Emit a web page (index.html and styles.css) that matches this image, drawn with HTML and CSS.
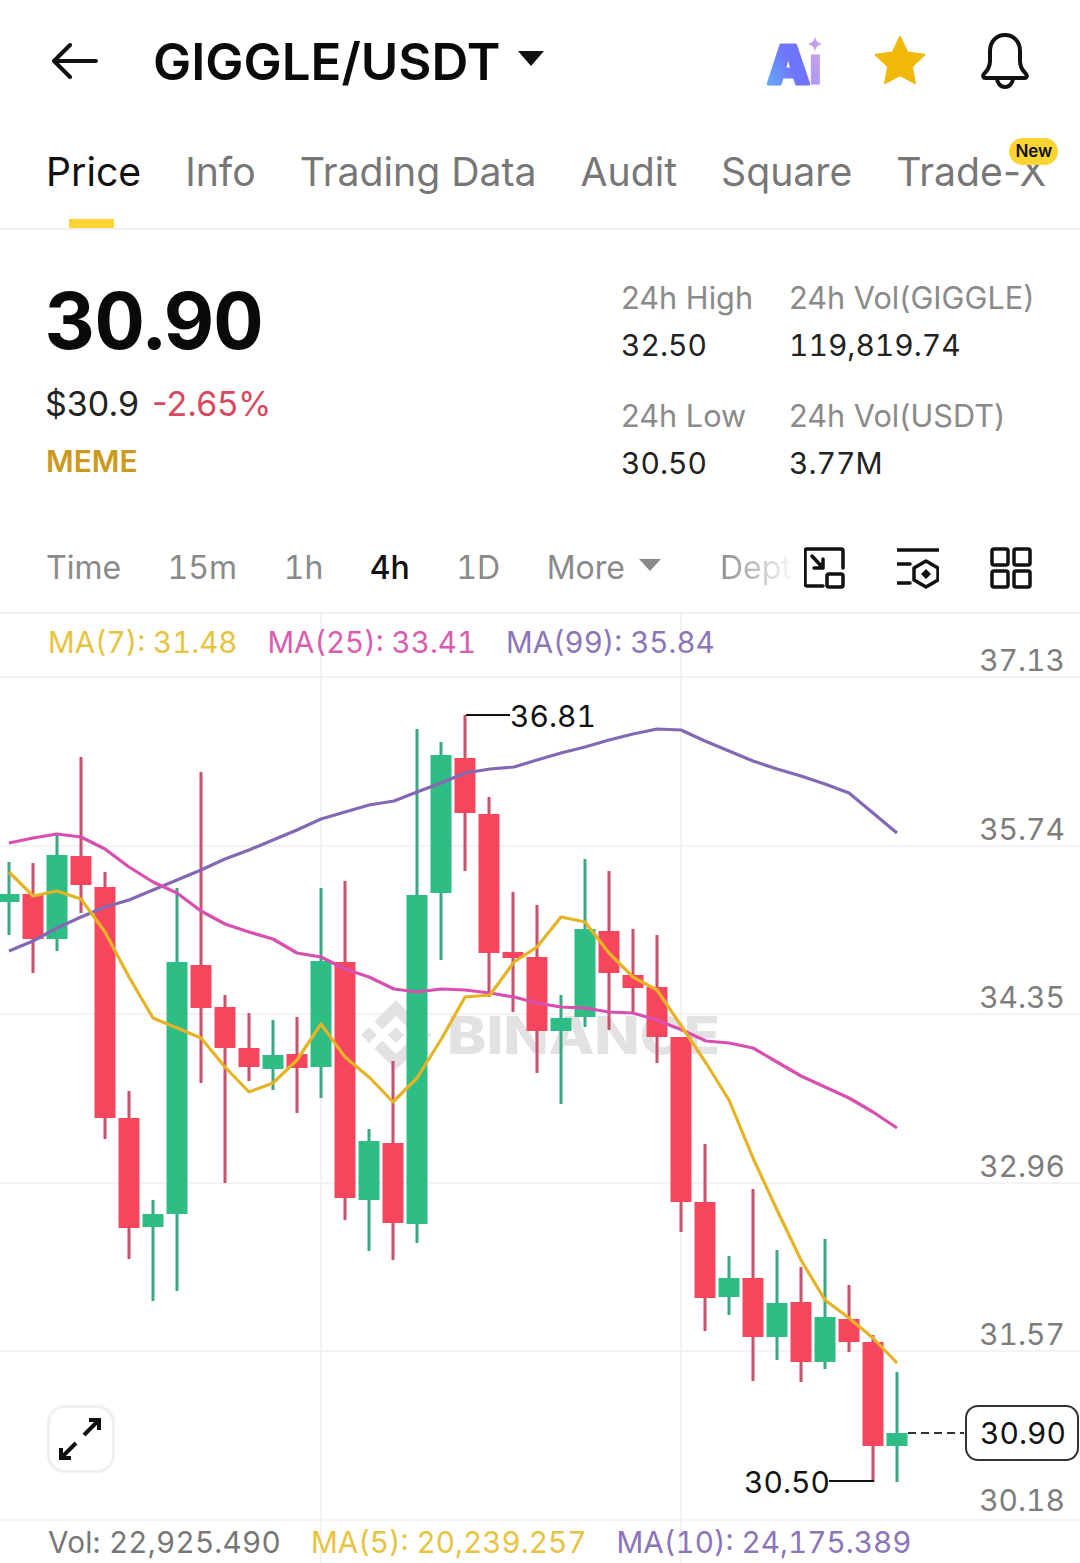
FILE: index.html
```html
<!DOCTYPE html>
<html lang="en">
<head>
    <meta charset="UTF-8">
    <title>GIGGLE/USDT</title>
    <link rel="stylesheet" href="styles.css">
</head>
<body>
    <div class="page">
        <header class="topbar">
            <svg class="back" viewBox="0 0 46 36"><path d="M44 18H3M18 2L2 18l16 16"/></svg>
            <h1 class="pair">GIGGLE/USDT</h1>
            <span class="pair-caret"></span>
            <div class="top-icons">
                <svg class="ai" width="60" height="60" viewBox="0 0 60 60">
                    <defs>
                        <linearGradient id="aiA" x1="0" y1="1" x2="1" y2="0.3">
                            <stop offset="0" stop-color="#62b4ff"/>
                            <stop offset="0.6" stop-color="#6f75fb"/>
                        </linearGradient>
                        <linearGradient id="aiI" x1="0" y1="1" x2="0" y2="0">
                            <stop offset="0" stop-color="#a796fb"/>
                            <stop offset="1" stop-color="#d3a3dc"/>
                        </linearGradient>
                    </defs>
                    <text class="ai-a" x="5" y="53" fill="url(#aiA)" stroke="url(#aiA)">A</text>
                    <text class="ai-i" x="46" y="53" fill="url(#aiI)" stroke="url(#aiI)">ı</text>
                    <path d="M53 5c.8 5 2.500 6.800 7.500 8-5 1.200-6.700 3-7.500 8-.8-5-2.500-6.800-7.500-8 5-1.200 6.700-3 7.500-8z" fill="#c4a0e6"/>
                </svg>
                <svg class="star" width="52" height="52" viewBox="0 0 52 52">
                    <path d="M26 2l7.300 15.500 17 2.200-12.500 11.700 3.200 16.800L26 40l-15 8.200 3.200-16.800L1.700 19.700l17-2.200z" stroke="#f0b90b" stroke-width="2" stroke-linejoin="round" fill="#f0b90b"/>
                </svg>
                <svg class="bell" width="50" height="56" viewBox="0 0 50 56">
                    <path d="M25 2c-9 0-15 7-15 16v10c0 6-2.500 9-6 13-1.500 2-.8 4 1.500 4h39c2.300 0 3-2 1.500-4-3.500-4-6-7-6-13V18C40 9 34 2 25 2zM17 45c0 5 3.500 9 8 9s8-4 8-9"/>
                </svg>
            </div>
        </header>

        <nav class="tabs">
            <a class="tab active">Price</a>
            <a class="tab">Info</a>
            <a class="tab">Trading Data</a>
            <a class="tab">Audit</a>
            <a class="tab">Square</a>
            <a class="tab">Trade-X<span class="badge">New</span></a>
        </nav>

        <section class="stats">
            <div class="stats-main">
                <div class="last-price">30.90</div>
                <div class="fiat"><span class="usd">$30.9</span><span class="change">-2.65%</span></div>
                <div class="tag">MEME</div>
            </div>
            <div class="stats-grid">
                <div class="stat"><span class="stat-label">24h High</span><span class="stat-val">32.50</span></div>
                <div class="stat"><span class="stat-label">24h Vol(GIGGLE)</span><span class="stat-val">119,819.74</span></div>
                <div class="stat"><span class="stat-label">24h Low</span><span class="stat-val">30.50</span></div>
                <div class="stat"><span class="stat-label">24h Vol(USDT)</span><span class="stat-val">3.77M</span></div>
            </div>
        </section>

        <div class="toolbar">
            <div class="tf-list">
                <span class="tf">Time</span>
                <span class="tf">15m</span>
                <span class="tf">1h</span>
                <span class="tf active">4h</span>
                <span class="tf">1D</span>
                <span class="tf">More</span>
                <span class="more-caret"></span>
                <span class="tf depth">Dept</span>
            </div>
            <div class="tool-icons">
                <svg width="42" height="42" viewBox="805 545 42 42">
                    <path d="M824 584h-16a2 2 0 0 1-2-2v-33a2 2 0 0 1 2-2h34a2 2 0 0 1 2 2v17M813 554l11 12M824 557v9h-9"/>
                    <rect x="828" y="572" width="16" height="13" rx="2"/>
                </svg>
                <svg width="42" height="42" viewBox="897 546 42 42">
                    <path d="M897 549h41M897 563h13M897 582h13"/>
                    <path d="M926 560l12 7v12l-12 7-12-7v-12z"/>
                    <path class="fill" d="M926 568l5 5-5 5-5-5z"/>
                </svg>
                <svg width="42" height="42" viewBox="990 545 42 42">
                    <rect x="992" y="547" width="16" height="16" rx="2"/>
                    <rect x="1014" y="547" width="16" height="16" rx="2"/>
                    <rect x="992" y="569" width="16" height="16" rx="2"/>
                    <rect x="1014" y="569" width="16" height="16" rx="2"/>
                </svg>
            </div>
        </div>

        <section class="chart">
            <svg class="plot" width="1080" height="951" viewBox="0 612 1080 951">
                <!-- grid -->
                <path class="grid" d="M0 677H1080M0 846H1080M0 1014H1080M0 1183H1080M0 1351H1080M0 1520H1080M321 612V1563M681 612V1563"/>

                <!-- watermark -->
                <path class="mark" transform="translate(361 1000) scale(.553)" d="M38.730 53.200L63.310 28.620l24.600 24.600 14.300-14.310L63.310 0 24.420 38.900l14.310 14.300zM0 63.310l14.300-14.310 14.310 14.310-14.310 14.300zM38.730 73.410l24.580 24.580 24.600-24.600 14.310 14.290-38.900 38.910-38.910-38.880-.02-.02zM98 63.310l14.300-14.310 14.310 14.300-14.310 14.320zM77.830 63.300L63.310 48.780 52.590 59.500l-1.240 1.230-2.540 2.540 14.500 14.500 14.520-14.510z"/>
                <text class="mark-text" x="447" y="1054" textLength="273" lengthAdjust="spacingAndGlyphs">BINANCE</text>

                <!-- wicks -->
                <path class="wick up" d="M9 862V935M57 833V951M153 1200V1301M177 888V1291M273 1020V1090M321 888V1098M369 1129V1251M417 729V1243M441 742V960M561 995V1104M585 859V1027M729 1256V1315M777 1250V1360M825 1239V1369M897 1372V1482"/>
                <path class="wick down" d="M33 863V973M81 757V913M105 872V1139M129 1091V1259M201 772V1083M225 995V1183M249 1013V1081M297 1017V1113M345 881V1220M393 1061V1260M465 715V871M489 797V997M513 892V1012M537 905V1073M609 871V1030M633 929V1012M657 935V1063M681 1037V1232M705 1144V1331M753 1189V1381M801 1267V1382M849 1285V1352M873 1335V1482"/>

                <!-- bodies -->
                <path class="body up" d="M9 894V902M57 855V939M153 1214V1227M177 962V1214M273 1055V1069M321 961V1067M369 1141V1200M417 895V1224M441 755V893M561 1018V1031M585 929V1017M729 1278V1297M777 1303V1337M825 1317V1362M897 1433V1446"/>
                <path class="body down" d="M33 894V939M81 856V885M105 887V1118M129 1118V1228M201 965V1008M225 1007V1048M249 1048V1067M297 1054V1068M345 962V1198M393 1143V1223M465 758V813M489 814V953M513 952V958M537 957V1031M609 931V973M633 975V988M657 987V1037M681 1037V1202M705 1202V1298M753 1278V1337M801 1302V1362M849 1319V1342M873 1342V1446"/>

                <!-- moving averages -->
                <polyline class="ma ma99" points="9,951 33,941 57,928 81,917 105,907 129,900 153,890 177,880 201,870 225,859 249,850 273,840 297,830 321,819 345,812 369,805 394,801 417,792 441,783 465,773 490,769 514,767 537,760 561,753 585,747 609,740 633,734 657,729 681,730 705,741 729,751 753,761 777,769 801,776 825,784 849,793 873,813 897,833"/>
                <polyline class="ma ma25" points="9,843 33,838 57,834 81,837 105,849 129,867 153,882 177,893 201,911 225,924 249,932 273,939 297,953 321,957 345,969 369,977 394,989 417,992 441,989 465,990 490,993 514,997 537,1003 561,1007 585,1008 609,1012 633,1013 657,1020 682,1030 706,1041 729,1043 753,1048 777,1062 801,1076 825,1087 849,1098 873,1112 897,1128"/>
                <polyline class="ma ma7" points="9,872 33,896 57,891 81,899 105,932 129,977 153,1018 177,1028 201,1038 225,1067 249,1092 273,1083 297,1060 321,1024 345,1057 370,1078 393,1102 417,1078 442,1038 465,997 490,995 514,962 537,947 561,917 585,922 609,953 633,977 657,990 682,1027 706,1063 729,1100 753,1158 777,1210 801,1260 825,1300 849,1318 873,1338 897,1363"/>

                <!-- high, low and last price -->
                <path class="marker" d="M466 715H510M829 1481H874"/>
                <text class="pin" x="510" y="727">36.81</text>
                <text class="pin" x="744" y="1493">30.50</text>
                <path class="last-line" d="M908 1433H964"/>
                <rect class="last-box" x="966" y="1406" width="112" height="54" rx="12"/>
                <text class="pin" x="980" y="1444">30.90</text>

                <!-- price axis -->
                <text class="axis" x="1065" y="671">37.13</text>
                <text class="axis" x="1065" y="840">35.74</text>
                <text class="axis" x="1065" y="1008">34.35</text>
                <text class="axis" x="1065" y="1177">32.96</text>
                <text class="axis" x="1065" y="1345">31.57</text>
                <text class="axis" x="1065" y="1511">30.18</text>
            </svg>

            <div class="legend">
                <span class="c-ma7">MA(7): 31.48</span>
                <span class="c-ma25">MA(25): 33.41</span>
                <span class="c-ma99">MA(99): 35.84</span>
            </div>

            <button class="expand">
                <svg width="46" height="46" viewBox="0 0 46 46"><path d="M26 19L41 4M31 4h10v10M18 27L3 42M3 32v10h10"/></svg>
            </button>

            <div class="legend vol">
                <span class="c-vol">Vol: 22,925.490</span>
                <span class="c-ma7">MA(5): 20,239.257</span>
                <span class="c-ma99">MA(10): 24,175.389</span>
            </div>
        </section>
    </div>
</body>
</html>
```

FILE: styles.css
```css
*{
    margin:0;
    padding:0;
    box-sizing:border-box;
}
body{
    background:#fff;
    font-family:"Inter","Liberation Sans",sans-serif;
    color:#111;
}
.page{
    width:1080px;
    height:1563px;
    overflow:hidden;
}

/* top bar */
.topbar{
    height:122px;
    display:flex;
    align-items:center;
    padding:0 50px 0 52px;
}
.back{
    width:46px;
    height:36px;
    margin-right:55px;
    fill:none;
    stroke:#111;
    stroke-width:4;
    stroke-linecap:round;
    stroke-linejoin:round;
}
.pair{
    font-size:51px;
    font-weight:600;
    line-height:1;
    color:#0a0a0a;
}
.pair-caret{
    width:0;
    height:0;
    margin-left:18px;
    margin-bottom:6px;
    border-left:13px solid transparent;
    border-right:13px solid transparent;
    border-top:15px solid #111;
}
.top-icons{
    margin-left:auto;
    display:flex;
    align-items:center;
    gap:54px;
}
.ai{
    overflow:visible;
    margin-right:-2px;
}
.ai-a,.ai-i{
    font-size:54px;
    font-weight:900;
    stroke-linejoin:round;
}
.ai-a{
    stroke-width:3;
}
.ai-i{
    font-weight:700;
    stroke-width:1;
}
.bell path{
    fill:none;
    stroke:#111;
    stroke-width:4;
    stroke-linejoin:round;
}

/* tabs */
.tabs{
    height:108px;
    display:flex;
    align-items:flex-start;
    gap:44px;
    padding:26px 0 0 46px;
    border-bottom:2px solid #eeeeee;
}
.tab{
    position:relative;
    font-size:39.2px;
    line-height:48px;
    color:#777;
    white-space:nowrap;
}
.tab.active{
    color:#111;
}
.tab.active::after{
    content:"";
    position:absolute;
    left:23px;
    top:71px;
    width:45px;
    height:9px;
    background:#fcd535;
}
.badge{
    position:absolute;
    right:-12px;
    top:-10px;
    height:27px;
    padding:0 6px;
    border-radius:14px;
    background:#fcd535;
    color:#111;
    font-size:17px;
    font-weight:600;
    line-height:27px;
}

/* price block */
.stats{
    height:300px;
    display:flex;
    justify-content:space-between;
    padding:0 0 0 45px;
}
.last-price{
    margin-top:48px;
    font-size:78px;
    font-weight:700;
    line-height:86px;
    letter-spacing:-1px;
    font-variant-numeric:tabular-nums;
    color:#0a0a0a;
}
.fiat{
    margin-top:18px;
    font-size:34px;
    line-height:44px;
}
.usd{
    color:#222;
}
.change{
    margin-left:13px;
    color:#d9485f;
}
.tag{
    margin-top:15px;
    padding-left:1px;
    font-size:30px;
    font-weight:600;
    line-height:40px;
    color:#c99a1e;
}
.stats-grid{
    width:459px;
    margin-top:48px;
    display:grid;
    grid-template-columns:168px 1fr;
    grid-auto-rows:118px;
}
.stat{
    display:flex;
    flex-direction:column;
    gap:7px;
}
.stat-label{
    font-size:30.700px;
    line-height:40px;
    color:#8a8a8a;
}
.stat-val{
    font-size:30px;
    line-height:40px;
    font-variant-numeric:tabular-nums;
    color:#222;
}

/* interval row */
.toolbar{
    height:82px;
    display:flex;
    align-items:center;
    padding:0 48px 6px 46px;
}
.tf-list{
    width:750px;
    display:flex;
    align-items:center;
    gap:46.5px;
    overflow:hidden;
}
.tf{
    font-size:32px;
    line-height:44px;
    font-variant-numeric:tabular-nums;
    color:#8a8a8a;
}
.tf.active{
    color:#111;
    font-weight:500;
}
.more-caret{
    flex:none;
    width:0;
    height:0;
    margin-left:-32.5px;
    margin-bottom:6px;
    border-left:11px solid transparent;
    border-right:11px solid transparent;
    border-top:12px solid #8a8a8a;
}
.depth{
    margin-left:12.5px;
    color:transparent;
    background:linear-gradient(90deg,#8a8a8a 0,#ffffff 76px);
    -webkit-background-clip:text;
    background-clip:text;
}
.tool-icons{
    margin-left:auto;
    display:flex;
    gap:51px;
}
.tool-icons svg{
    fill:none;
    stroke:#111;
    stroke-width:3.5;
    stroke-linecap:round;
    stroke-linejoin:round;
}
.tool-icons .fill{
    fill:#111;
    stroke:none;
}

/* chart */
.chart{
    position:relative;
    height:951px;
    border-top:2px solid #f0f0f0;
    display:flex;
    flex-direction:column;
    justify-content:space-between;
}
.plot{
    position:absolute;
    left:0;
    top:-2px;
}
.grid{
    fill:none;
    stroke:#eff0f1;
    stroke-width:1.500;
}
.mark{
    fill:#e2e2e2;
}
.mark-text{
    font-size:52px;
    font-weight:800;
    fill:#e2e2e2;
}
.wick{
    fill:none;
    stroke-width:3;
}
.wick.up{
    stroke:#39a985;
}
.wick.down{
    stroke:#c8506a;
}
.body{
    fill:none;
    stroke-width:21;
}
.body.up{
    stroke:#2ebd85;
}
.body.down{
    stroke:#f6465d;
}
.ma{
    fill:none;
    stroke-width:3.2;
    stroke-linejoin:round;
}
.ma7{
    stroke:#e6b325;
}
.ma25{
    stroke:#d94fb0;
}
.ma99{
    stroke:#8468b4;
}
.marker{
    fill:none;
    stroke:#111;
    stroke-width:2;
}
.last-line{
    fill:none;
    stroke:#333;
    stroke-width:2;
    stroke-dasharray:8 5;
}
.last-box{
    fill:#fff;
    stroke:#333;
    stroke-width:2;
}
.pin{
    font-size:30px;
    font-variant-numeric:tabular-nums;
    fill:#111;
}
.axis{
    font-size:30px;
    font-variant-numeric:tabular-nums;
    fill:#7d7d7d;
    text-anchor:end;
}
.legend{
    position:relative;
    height:55px;
    display:flex;
    align-items:center;
    gap:30px;
    padding-left:48px;
    font-size:29.5px;
    font-variant-numeric:tabular-nums;
    white-space:nowrap;
}
.legend.vol{
    height:43px;
    font-size:29.7px;
}
.c-ma7{
    color:#e8c33f;
}
.c-ma25{
    color:#d95cb0;
}
.c-ma99{
    color:#8b75b9;
}
.c-vol{
    letter-spacing:.2px;
    color:#777;
}
.expand{
    position:absolute;
    left:47px;
    top:791px;
    width:68px;
    height:68px;
    display:flex;
    align-items:center;
    justify-content:center;
    background:#fff;
    border:3px solid #f0f0f0;
    border-radius:18px;
}
.expand svg{
    fill:none;
    stroke:#111;
    stroke-width:4;
}
```
